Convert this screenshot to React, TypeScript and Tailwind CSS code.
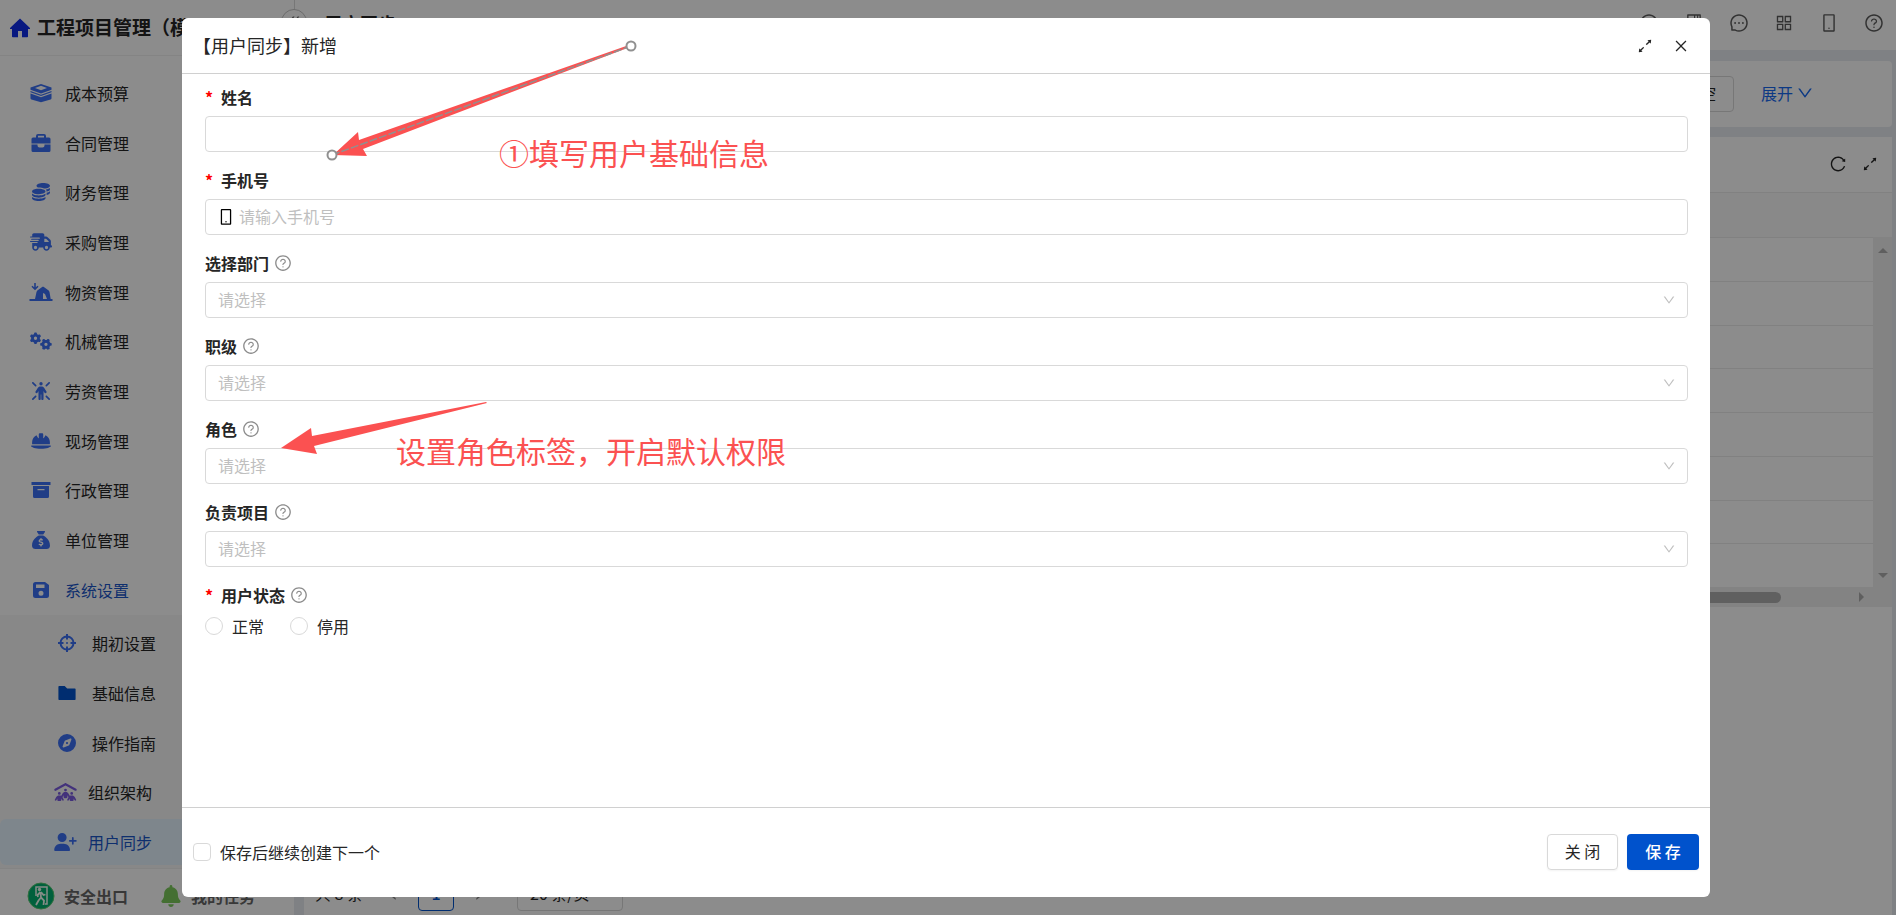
import type { ReactNode } from "react";
import {
  AiFillFolder,
  AiOutlineAppstore,
  AiOutlineArrowsAlt,
  AiOutlineBook,
  AiOutlineClockCircle,
  AiOutlineClose,
  AiOutlineDoubleLeft,
  AiOutlineDown,
  AiOutlineLeft,
  AiOutlineMessage,
  AiOutlineMobile,
  AiOutlineQuestionCircle,
  AiOutlineReload,
  AiOutlineRight,
} from "react-icons/ai";
import {
  FaBell,
  FaCoins,
  FaCompass,
  FaGears,
  FaHelmetSafety,
  FaPeopleRoof,
  FaPersonRays,
  FaSackDollar,
  FaTruckFast,
  FaUserPlus,
} from "react-icons/fa6";

interface MenuEntry {
  label: string;
  icon: ReactNode;
  active?: boolean;
}

const BoxStackIcon = () => (
  <svg viewBox="0 0 22 20" className="w-[22px] h-5" fill="currentColor">
    <path d="M11 1 21.500 4.600v2.200L11 10.600.5 6.800V4.600L11 1Zm0 1.800L5 5l6 2.200L17 5l-6-2.200Z" fillRule="evenodd" />
    <path d="m.5 8 10.500 3.800L21.500 8v1.200L11 13 .5 9.200V8Z" />
    <path d="m.5 10.400 10.500 3.800 10.500-3.800v4.900c0 .6-.3 1-.9 1.200L11 19.200l-9.600-2.700c-.6-.2-.9-.6-.9-1.200v-4.900Z" />
  </svg>
);

const BriefcaseIcon = () => (
  <svg viewBox="0 0 20 18" className="w-5 h-[18px]" fill="currentColor">
    <path
      d="M5 3.500V2a2 2 0 0 1 2-2h6a2 2 0 0 1 2 2v1.500h3A1.500 1.500 0 0 1 19.500 5v4.500H.5V5A1.500 1.500 0 0 1 2 3.500h3Zm2 0h6V1.800H7v1.700Z"
      fillRule="evenodd"
    />
    <path d="M.5 10.500h6v1a2 2 0 0 0 2 2h3a2 2 0 0 0 2-2v-1h6v6A1.500 1.500 0 0 1 18 18H2a1.500 1.500 0 0 1-1.500-1.500v-6Z" />
  </svg>
);

const DepotIcon = () => (
  <svg viewBox="0 0 24 20" className="w-6 h-5" fill="none">
    <path d="M6 1v6M3 4.200 6 7.200l3-3" stroke="currentColor" strokeWidth="1.600" />
    <path
      d="M6 17 7.500 10c.3-1 .8-1.500 1.500-2l3.800-2.800c.8-.6 1.600-.6 2.400 0L19 8c.7.5 1.200 1 1.500 2l1.200 7h1.800v2H.5v-2H6Zm8-6v6h4l-2-5-2-1Z"
      fill="currentColor"
      fillRule="evenodd"
    />
  </svg>
);

const ArchiveIcon = () => (
  <svg viewBox="0 0 20 18" className="w-5 h-[18px]" fill="currentColor">
    <path d="M.5 1h19v3H.5zM2 5h16v10.500a1.500 1.500 0 0 1-1.500 1.500h-13A1.500 1.500 0 0 1 2 15.500V5Zm4.500 3v1.300h7V8h-7Z" fillRule="evenodd" />
  </svg>
);

const DiskIcon = () => (
  <svg viewBox="0 0 18 18" className="w-[18px] h-[18px]" fill="currentColor">
    <path
      d="M3.500 1h9.500L17 4v10.500A2.500 2.500 0 0 1 14.500 17h-11A2.500 2.500 0 0 1 1 14.500v-11A2.500 2.500 0 0 1 3.500 1ZM4 3.500v3.500h8.500V3.500H4Zm5 6.200a2.500 2.500 0 1 0 0 5 2.500 2.500 0 0 0 0-5Z"
      fillRule="evenodd"
    />
  </svg>
);

const TargetIcon = () => (
  <svg viewBox="0 0 18 18" className="w-[18px] h-[18px]" fill="none" stroke="currentColor">
    <circle cx="9" cy="9" r="6.500" strokeWidth="2" />
    <path d="M9 0v5.500M9 12.500v5.500M0 9h5.500M12.500 9h5.500" strokeWidth="2" />
    <circle cx="9" cy="9" r="1" fill="currentColor" stroke="none" />
  </svg>
);

const HomeIcon = () => (
  <svg viewBox="0 0 20 20" className="w-5 h-5 text-[#0f2de9]" fill="currentColor">
    <path d="M10 .5 20 10v1h-2v7.500a.8.8 0 0 1-.8.8H12V13H8v6.300H2.800a.8.8 0 0 1-.8-.8V11H0v-1L10 .5Z" />
  </svg>
);

const ExitIcon = () => (
  <svg viewBox="0 0 28 28" className="w-7 h-7">
    <circle cx="14" cy="14" r="13" fill="#00b070" stroke="#55cc70" strokeWidth="1" />
    <path d="M9 14V5h11v17h-2" fill="none" stroke="#f2fff6" strokeWidth="1.500" />
    <circle cx="12.500" cy="7.500" r="1.700" fill="#f2fff6" />
    <path
      d="m13.500 10-3 3 .5 2M14 10l2.500 3 2-.5M13.500 10.500l.5 5-2.500 3-2.500 4.500M14 15.500l3 3-.5 4.500"
      fill="none"
      stroke="#f2fff6"
      strokeWidth="1.800"
    />
  </svg>
);

const mainMenu: MenuEntry[] = [
  { label: "成本预算", icon: <BoxStackIcon /> },
  { label: "合同管理", icon: <BriefcaseIcon /> },
  { label: "财务管理", icon: <FaCoins className="w-[18px] h-[18px]" /> },
  { label: "采购管理", icon: <FaTruckFast className="w-[22px] h-5" /> },
  { label: "物资管理", icon: <DepotIcon /> },
  { label: "机械管理", icon: <FaGears className="w-[22px] h-5" /> },
  { label: "劳资管理", icon: <FaPersonRays className="w-[18px] h-[18px]" /> },
  { label: "现场管理", icon: <FaHelmetSafety className="w-5 h-5" /> },
  { label: "行政管理", icon: <ArchiveIcon /> },
  { label: "单位管理", icon: <FaSackDollar className="w-[18px] h-[18px]" /> },
  { label: "系统设置", icon: <DiskIcon />, active: true },
];

const subMenu: MenuEntry[] = [
  { label: "期初设置", icon: <TargetIcon /> },
  { label: "基础信息", icon: <AiFillFolder className="w-[22px] h-[22px] text-[#0052cc]" /> },
  { label: "操作指南", icon: <FaCompass className="w-[18px] h-[18px]" /> },
];

const subMenuWide: MenuEntry[] = [
  { label: "组织架构", icon: <FaPeopleRoof className="w-[23px] h-[18px] text-[#7a5ce0]" /> },
  { label: "用户同步", icon: <FaUserPlus className="w-[23px] h-[18px]" />, active: true },
];

const headerIcons = [
  AiOutlineClockCircle,
  AiOutlineBook,
  AiOutlineMessage,
  AiOutlineAppstore,
  AiOutlineMobile,
  AiOutlineQuestionCircle,
];

const selectFields = [
  { id: "department", label: "选择部门" },
  { id: "rank", label: "职级" },
  { id: "role", label: "角色" },
  { id: "project", label: "负责项目" },
];

function Sidebar() {
  return (
    <aside className="flex w-[294px] shrink-0 flex-col bg-white">
      <div className="flex h-14 shrink-0 items-center gap-[7px] overflow-hidden whitespace-nowrap border-b border-[#f0f0f0] pl-[10px] text-[19px] font-bold">
        <HomeIcon />
        工程项目管理（模板）
      </div>
      <nav className="flex flex-1 flex-col pt-3">
        <ul className="flex flex-[11] flex-col">
          {mainMenu.map((item) => (
            <li key={item.label} className="flex flex-1">
              <a href="#" className={`flex flex-1 items-center gap-3 pl-[28px] ${item.active ? "text-[#1a56c8]" : ""}`}>
                <span className="flex w-[25px] justify-center text-[#3b70f5]">{item.icon}</span>
                {item.label}
              </a>
            </li>
          ))}
        </ul>
        <ul className="flex flex-[5] flex-col bg-[#f8f8f8] pb-px pt-1">
          {subMenu.map((item) => (
            <li key={item.label} className="flex flex-1 py-[2px]">
              <a href="#" className="flex flex-1 items-center gap-[13px] pl-[55px]">
                <span className="flex w-6 justify-center text-[#3b70f5]">{item.icon}</span>
                {item.label}
              </a>
            </li>
          ))}
          {subMenuWide.map((item) => (
            <li key={item.label} className="flex flex-1 py-[2px]">
              <a
                href="#"
                className={`flex flex-1 items-center gap-[11px] rounded-md pl-[53px] ${
                  item.active ? "bg-[#e6f4ff] text-[#1a56c8]" : ""
                }`}
              >
                <span className="flex w-6 justify-center text-[#3b70f5]">{item.icon}</span>
                {item.label}
              </a>
            </li>
          ))}
        </ul>
      </nav>
      <div className="flex h-[47px] shrink-0 items-center border-t border-[#f0f0f0] pl-[27px] pt-2 font-bold text-[#666]">
        <a href="#" className="flex items-center gap-[9px]">
          <ExitIcon />
          安全出口
        </a>
        <a href="#" className="ml-[33px] flex items-center gap-[10px]">
          <FaBell className="h-[22px] w-5 text-[#7ccb5c]" />
          我的任务
        </a>
      </div>
    </aside>
  );
}

function Topbar() {
  return (
    <header className="relative flex h-[50px] shrink-0 items-center justify-between border-l border-[#d9d9d9] bg-white pb-1 pl-[29px] pr-3">
      <button
        aria-label="收起菜单"
        className="absolute -left-[14px] top-[9px] flex h-[26px] w-[26px] items-center justify-center rounded-full border border-[#c4c4c4] bg-white text-[#666]"
      >
        <AiOutlineDoubleLeft className="h-4 w-4" />
      </button>
      <h1 className="text-[18px] font-bold">用户同步</h1>
      <div className="flex items-center gap-[25px] text-[#5c5c5c]">
        {headerIcons.map((Icon, i) => (
          <button key={i} aria-label={`工具${i + 1}`}>
            <Icon className="block h-5 w-5" />
          </button>
        ))}
      </div>
    </header>
  );
}

function TableArea() {
  return (
    <section className="flex flex-1 flex-col bg-white">
      <div className="flex h-14 shrink-0 items-center justify-end gap-[14px] border-b border-[#ebebeb] pb-[2px] pr-[13px]">
        <button aria-label="刷新">
          <AiOutlineReload className="block h-[18px] w-[18px]" />
        </button>
        <button aria-label="全屏">
          <AiOutlineArrowsAlt className="block h-[18px] w-[18px]" />
        </button>
      </div>
      <div className="h-11 shrink-0 bg-[#fafafa]" />
      <div className="flex h-[350px] shrink-0">
        <div className="flex flex-1 flex-col">
          {Array.from({ length: 8 }, (_, i) => (
            <div key={i} className="flex-1 border-t border-[#ebebeb]" />
          ))}
        </div>
        <div className="flex w-[19px] flex-col items-center justify-between bg-[#efefef] pb-[9px] pt-[11px]">
          <span className="border-x-[5px] border-b-[5px] border-x-transparent border-b-[#aeaeae]" />
          <span className="border-x-[5px] border-t-[5px] border-x-transparent border-t-[#aeaeae]" />
        </div>
      </div>
      <div className="flex h-5 shrink-0 items-center bg-[#efefef] pr-7">
        <span className="mr-[78px] h-[11px] flex-1 rounded-full bg-[#b0b0b0]" />
        <span className="border-y-[5px] border-l-[5px] border-y-transparent border-l-[#aeaeae]" />
      </div>
      <div className="mb-1 mt-auto flex h-9 shrink-0 items-center pl-[11px]">
        <span className="w-[68px]">共 8 条</span>
        <AiOutlineLeft className="h-[18px] w-[18px] text-[#888]" />
        <button className="ml-[17px] h-9 w-9 rounded border border-[#0052cc] font-medium text-[#0052cc]">1</button>
        <AiOutlineRight className="ml-[17px] h-[18px] w-[18px] text-[#888]" />
        <select aria-label="每页条数" className="ml-[28px] h-9 w-[106px] appearance-none rounded border border-[#d9d9d9] px-3">
          <option>20 条/页</option>
        </select>
      </div>
    </section>
  );
}

function FieldLabel({ id, label, required, help }: { id?: string; label: string; required?: boolean; help?: boolean }) {
  return (
    <div className="flex h-9 items-center gap-[5px] pb-[2px]">
      <label htmlFor={id} className="flex items-center font-bold">
        {required && <span className="w-4 text-[#ff0000]">*</span>}
        {label}
      </label>
      {help && <AiOutlineQuestionCircle className="h-[18px] w-[18px] text-[#8c8c8c]" />}
    </div>
  );
}

function UserDialog() {
  return (
    <div role="dialog" aria-label="新增用户" className="flex flex-1 flex-col rounded-md bg-white">
      <div className="flex h-14 shrink-0 items-center justify-between border-b border-[#d0d0d0] pl-[11px] pr-[21px]">
        <h2 className="text-[18px]">【用户同步】新增</h2>
        <div className="flex items-center gap-[19px]">
          <button aria-label="全屏">
            <AiOutlineArrowsAlt className="block h-[18px] w-[18px]" />
          </button>
          <button aria-label="关闭窗口">
            <AiOutlineClose className="block h-4 w-4" />
          </button>
        </div>
      </div>

      <form className="flex flex-1 flex-col gap-[11px] pl-[23px] pr-[22px] pt-[6px]">
        <div>
          <FieldLabel id="name" label="姓名" required />
          <input id="name" className="block h-9 w-full rounded border border-[#d9d9d9] px-3 pb-[2px] outline-none" />
        </div>
        <div>
          <FieldLabel id="phone" label="手机号" required />
          <div className="flex h-9 items-center gap-1 rounded border border-[#d9d9d9] px-[11px]">
            <AiOutlineMobile className="h-[18px] w-[18px] text-black" />
            <input
              id="phone"
              placeholder="请输入手机号"
              className="flex-1 pb-[2px] outline-none placeholder:text-[#bfbfbf]"
            />
          </div>
        </div>
        {selectFields.map((field) => (
          <div key={field.id}>
            <FieldLabel id={field.id} label={field.label} help />
            <div className="relative">
              <select
                id={field.id}
                className="block h-9 w-full appearance-none rounded border border-[#d9d9d9] px-3 pb-[2px] text-[#bfbfbf] outline-none"
              >
                <option>请选择</option>
              </select>
              <AiOutlineDown className="pointer-events-none absolute right-3 top-[11px] h-[14px] w-[14px] text-[#bfbfbf]" />
            </div>
          </div>
        ))}
        <div>
          <FieldLabel label="用户状态" required help />
          <div className="flex items-center gap-[26px]">
            {["正常", "停用"].map((status) => (
              <label key={status} className="flex items-center gap-[9px]">
                <input
                  type="radio"
                  name="status"
                  className="h-[18px] w-[18px] appearance-none rounded-full border border-[#d9d9d9] checked:border-[5px] checked:border-[#0052cc]"
                />
                {status}
              </label>
            ))}
          </div>
        </div>
      </form>

      <div className="flex h-[90px] shrink-0 items-center justify-between border-t border-[#d0d0d0] px-[11px] pb-[2px]">
        <label className="flex items-center gap-[9px]">
          <input
            type="checkbox"
            className="h-[18px] w-[18px] appearance-none rounded-sm border border-[#d9d9d9] checked:bg-[#0052cc]"
          />
          保存后继续创建下一个
        </label>
        <div className="flex gap-[9px]">
          <button className="h-9 w-[71px] rounded border border-[#d9d9d9] pb-[2px] shadow-xs">关 闭</button>
          <button className="h-9 w-[72px] rounded bg-[#0052cc] pb-[2px] font-medium text-white shadow-xs">保 存</button>
        </div>
      </div>
    </div>
  );
}

// Hand-placed notes floating above the dialog
function Annotations() {
  return (
    <div className="pointer-events-none absolute inset-0 text-[30px] leading-[44px] text-[#fb5151]">
      <svg className="absolute left-0 top-0 h-[480px] w-[700px]" viewBox="0 0 700 480">
        <polygon points="333,155 358,132 359,140 629,45 630,47 363,149 367,156" fill="currentColor" />
        <polygon points="281,448 311,428 312,436 486,402 487,403 314,446 317,454" fill="currentColor" />
        <line x1="332" y1="155" x2="631" y2="46" stroke="#909090" strokeWidth="1.500" strokeDasharray="8 2" />
        <circle cx="332" cy="155" r="4.500" fill="#fff" stroke="#909090" strokeWidth="2" />
        <circle cx="631" cy="46" r="4.500" fill="#fff" stroke="#909090" strokeWidth="2" />
      </svg>
      <span className="absolute left-[499px] top-[130px] whitespace-nowrap">①填写用户基础信息</span>
      <span className="absolute left-[396px] top-[428px] whitespace-nowrap">设置角色标签，开启默认权限</span>
    </div>
  );
}

export default function App() {
  return (
    <div
      lang="zh-CN"
      className="relative flex min-h-screen overflow-hidden bg-[#e8ebf0] font-['Noto_Sans_CJK_SC',sans-serif] text-base text-[#262626]"
    >
      <Sidebar />
      <main className="flex min-w-0 flex-1 flex-col">
        <Topbar />
        <div className="flex flex-1 flex-col gap-[10px] pl-[10px] pr-[4px] pt-[11px]">
          <section className="flex h-[66px] shrink-0 items-center justify-end gap-[27px] rounded bg-white pr-[78px]">
            <button className="h-9 w-[71px] rounded border border-[#d9d9d9] pb-[2px]">清 空</button>
            <button className="flex items-center gap-[3px] pb-[2px] text-[#1668f0]">
              展开
              <AiOutlineDown className="h-[18px] w-[18px]" />
            </button>
          </section>
          <TableArea />
        </div>
      </main>

      <div className="absolute inset-0 flex bg-black/45 py-[18px] pl-[182px] pr-[186px]">
        <UserDialog />
      </div>
      <Annotations />
    </div>
  );
}
